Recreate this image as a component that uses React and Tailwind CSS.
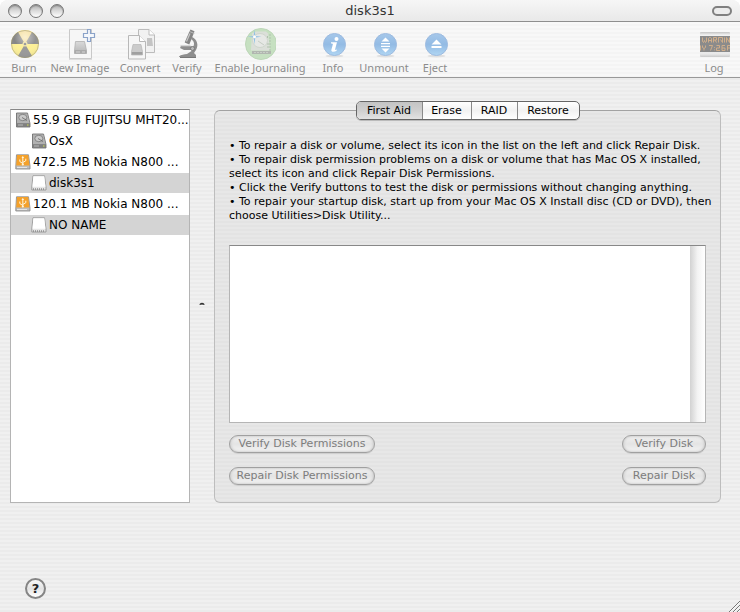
import React from 'react';

const STRIPES = 'bg-[repeating-linear-gradient(to_bottom,#f0f0f0_0px,#f0f0f0_2px,#ebebeb_2px,#ebebeb_4px)]';
const PANEL_STRIPES = 'bg-[repeating-linear-gradient(to_bottom,#e7e7e7_0px,#e7e7e7_2px,#e3e3e3_2px,#e3e3e3_4px)]';

function BurnIcon() {
  return (
    <svg viewBox="0 0 32 32" className="size-8">
      <defs>
        <radialGradient id="burnShade" cx="50%" cy="25%" r="80%">
          <stop offset="0" stopColor="#fff" stopOpacity=".5" />
          <stop offset=".5" stopColor="#fff" stopOpacity="0" />
          <stop offset="1" stopColor="#555" stopOpacity=".15" />
        </radialGradient>
      </defs>
      <circle cx="17" cy="16" r="14" fill="#fdf096" />
      <path d="M17 16 10 3.900A14 14 0 0 1 24 3.900Z" fill="#f6e0a0" />
      <path d="M17 16 10 3.900A14 14 0 0 0 3 16Z" fill="#868686" />
      <path d="M17 16 24 3.900A14 14 0 0 1 31 16Z" fill="#929292" />
      <path d="M17 16 10 28.100A14 14 0 0 0 24 28.100Z" fill="#989898" />
      <circle cx="17" cy="16" r="2.500" fill="#f3e6a0" />
      <circle cx="17" cy="16" r="1.300" fill="#888" />
      <circle cx="17" cy="16" r="13.500" fill="url(#burnShade)" stroke="#9a9478" strokeOpacity=".5" />
    </svg>
  );
}

function NewImageIcon() {
  return (
    <svg viewBox="0 0 32 32" className="size-8">
      <defs>
        <linearGradient id="miniDrive" x1="0" y1="0" x2="0" y2="1">
          <stop offset="0" stopColor="#dadada" />
          <stop offset="1" stopColor="#b4b4b4" />
        </linearGradient>
      </defs>
      <path d="M5.500 1.500H27.500V30.500H5.500Z" fill="#f6f6f6" stroke="#c9c9c9" />
      <path d="M5 31.500H28" stroke="#ddd" />
      <path d="M11.500 13.500h9l2 9v3h-12v-3Z" fill="url(#miniDrive)" stroke="#b0b0b0" strokeWidth=".8" />
      <path d="M10.500 22h12v3.500h-12Z" fill="#a9a9a9" />
      <path d="M12 24h4M18 24h3" stroke="#dedede" strokeWidth=".8" />
      <path d="M23.500 1.500h3v4h4v4h-4v4h-3v-4h-4v-4h4Z" fill="#f5f8fc" stroke="#8ba3c9" strokeWidth="1.200" />
    </svg>
  );
}

function ConvertIcon() {
  return (
    <svg viewBox="0 0 32 32" className="size-8">
      <path d="M14.500 1.500H25l5.500 5.500V24.500H14.500Z" fill="#f1f1f1" stroke="#bcbcbc" />
      <path d="M25 1.500V7h5.500" fill="#fff" stroke="#bcbcbc" />
      <path d="M23 10h5l1 8h-6Z" fill="#c4c4c4" />
      <path d="M4.500 7.500H15.500l6 6V31H4.500Z" fill="#f6f6f6" stroke="#b8b8b8" />
      <path d="M15.500 7.500v6h6" fill="#fff" stroke="#b8b8b8" />
      <path d="M9 16.500h8l1.500 7v3.500H7.500V23.500Z" fill="#cbcbcb" stroke="#afafaf" strokeWidth=".6" />
      <path d="M7.800 24h10.500v2.700h-10.500Z" fill="#a0a0a0" />
    </svg>
  );
}

function VerifyIcon() {
  return (
    <svg viewBox="0 0 32 32" className="size-8">
      <path d="M8 28.500c2-2 5-2 8-2.500l6-4h-9l-4-2 1-2h9l3 1c2-3 1-6-2-8l1-2c5 2 7 8 4 13l-2 3 2 2v2H8Z" fill="#8e8e8e" />
      <path d="M19.500 1.500l4 1.800-1 2.700-4.200 10.500-4.600-2L18 4.500Z" fill="#858585" />
      <path d="M19 5.500l-3.500 8" stroke="#c9c9c9" strokeWidth="1.200" />
      <path d="M18.500 3.500l5 2" stroke="#c9c9c9" strokeWidth=".8" />
      <path d="M9.500 18h10" stroke="#b5b5b5" />
      <circle cx="21.500" cy="20.500" r="2" fill="#b9b9b9" stroke="#7a7a7a" />
      <path d="M9 29.500h16" stroke="#777" />
    </svg>
  );
}

function JournalIcon() {
  return (
    <svg viewBox="0 0 32 32" className="size-8">
      <circle cx="17" cy="16" r="15.500" fill="#c6e0c1" stroke="#bdd6b8" />
      <path d="M8 5.500 12 3.500h10l2 2 2 17H7Z" fill="#dbdfd9" />
      <ellipse cx="16" cy="12.500" rx="7.500" ry="7" fill="#e6e8e5" stroke="#cfd6cd" />
      <path d="M14 13l6 4" stroke="#c6cdc4" />
      <path d="M8 23h19v3H8Z" fill="#b1b7b0" />
      <path d="M10 24.500h15" stroke="#c9cfc7" strokeDasharray="2 1" />
      <path d="M26 6v18M23.500 8v3M24 15v6" stroke="#b0c2ad" strokeDasharray="2 1" />
      <path d="M10.500 1.500 11.300 8l6.200.8-6.200.8-.8 7-.8-7-6.200-.8 6.200-.8Z" fill="#8fc0e4" />
      <circle cx="10.500" cy="8.800" r="1.500" fill="#fff" />
    </svg>
  );
}

function BlueDisc({ id, children }) {
  return (
    <svg viewBox="0 0 32 32" className="size-8">
      <defs>
        <linearGradient id={id} x1="0" y1="0" x2="0" y2="1">
          <stop offset="0" stopColor="#a6c8ea" />
          <stop offset=".5" stopColor="#93bbe4" />
          <stop offset="1" stopColor="#b0d6f3" />
        </linearGradient>
      </defs>
      <ellipse cx="17.500" cy="28" rx="9" ry="1.500" fill="#e0e0e0" />
      <circle cx="17.500" cy="16.500" r="11" fill={`url(#${id})`} stroke="#9dbbe0" />
      {children}
    </svg>
  );
}

function InfoIcon() {
  return (
    <BlueDisc id="discInfo">
      <circle cx="19.500" cy="11" r="2" fill="#fff" />
      <path d="M14 14.300h6l-1.900 7c-.2 1 .4 1 1.800.3l-.3 1.200c-2 1.400-6 1.600-5.200-1l1.400-5.300c.2-.8-.2-1-1.800-1Z" fill="#fff" />
    </BlueDisc>
  );
}

function UnmountIcon() {
  return (
    <BlueDisc id="discUnmount">
      <path d="M17.500 9.500l4 4h-8ZM13 15h9v1.300h-9ZM13 17.700h9v1.300h-9ZM13.500 20.500h8l-4 4Z" fill="#fff" />
    </BlueDisc>
  );
}

function EjectIcon() {
  return (
    <BlueDisc id="discEject">
      <path d="M17.500 11.500l5 5h-10ZM12.500 18h10v2h-10Z" fill="#fff" />
    </BlueDisc>
  );
}

function LogIcon() {
  return (
    <svg viewBox="0 0 32 32" className="size-8">
      <defs>
        <linearGradient id="logFrame" x1="0" y1="0" x2="0" y2="1">
          <stop offset="0" stopColor="#c4c4c4" />
          <stop offset=".12" stopColor="#f1f1f1" />
          <stop offset=".88" stopColor="#e9e9e9" />
          <stop offset="1" stopColor="#c9c9c9" />
        </linearGradient>
      </defs>
      <rect x="2" y="4" width="30" height="25" rx="1" fill="url(#logFrame)" />
      <rect x="2" y="8" width="30" height="16" fill="#8b8b8b" />
      <g fill="none" stroke="#d6b18a" strokeWidth=".9">
        <path d="M4.500 9.500v4l1 1 1-2 1 2 1-1v-4M10.500 14.500v-4l1-1h1l1 1v4M10.500 12.500h3M15.500 14.500v-5h3v2.500h-3M17 12l1.500 2.500M20.500 14.500v-5h4v5l-2-3M26.500 9.500v5M28.500 14.500v-5l3 5v-5" />
        <path d="M2.500 17.500v5M4.500 17.500v2l1.500 1 1.500-1v-2M6 20.500v2M11 17.500h3.500l-2 5M16.500 19v.8M16.500 21.500v.8M18.500 17.500h3v2.500h-3v2.500h3.500M27 17.500h-3v5h3v-2.500h-3M29.500 22.500v-5h2.500M29.500 20h2.500" />
      </g>
    </svg>
  );
}

function DriveIcon() {
  return (
    <svg viewBox="0 0 16 16" className="size-4 shrink-0">
      <path d="M1.500 1h11L15 11.500V15H1.500Z" fill="#8c8c8c" stroke="#686868" strokeWidth=".8" />
      <path d="M2 1.500h10.300L14.500 11H2Z" fill="#b1b1b1" />
      <ellipse cx="7.800" cy="5.500" rx="4" ry="3.200" fill="#c9c9c9" stroke="#777" strokeWidth=".8" />
      <path d="M7 5.500l5 3" stroke="#666" strokeWidth=".8" />
      <path d="M2 11.500h12.500V14.500H2Z" fill="#808080" />
      <path d="M3 13h5" stroke="#c9c9c9" strokeWidth=".8" />
      <path d="M12 13h1.500" stroke="#d4e04c" />
    </svg>
  );
}

function UsbDriveIcon() {
  return (
    <svg viewBox="0 0 16 16" className="size-4 shrink-0">
      <path d="M1.500 .8h12L15 12v3H.8V12Z" fill="#bdbdbd" stroke="#858585" strokeWidth=".8" />
      <path d="M2 1h11.200l1.300 10.500H1.200Z" fill="#f4a12b" />
      <path d="M7.800 11V2.800M7.800 9.500 4.800 7.500V5.500M7.800 8.500l3-1.800V4.700" fill="none" stroke="#fff5dc" />
      <path d="M6.500 4 7.800 2l1.300 2Z" fill="#fff5dc" />
      <circle cx="7.800" cy="10.500" r="1.100" fill="#fff5dc" />
      <path d="M2 13.500h10" stroke="#efefef" strokeWidth=".8" />
    </svg>
  );
}

function VolumeIcon() {
  return (
    <svg viewBox="0 0 16 16" className="size-4 shrink-0">
      <path d="M2 .8h11.500L15 12v3H.8V12Z" fill="#e6e6e6" stroke="#8f8f8f" strokeWidth=".8" />
      <path d="M2.300 1.200h11l1.200 10.600H1.500Z" fill="#fff" />
      <path d="M2 14h12" stroke="#666" strokeDasharray="1 1" />
    </svg>
  );
}

const tools = [
  { label: 'Burn', Icon: BurnIcon, width: 'w-8' },
  { label: 'New Image', Icon: NewImageIcon, width: 'w-[58px]' },
  { label: 'Convert', Icon: ConvertIcon, width: 'w-10' },
  { label: 'Verify', Icon: VerifyIcon, width: 'w-8' },
  { label: 'Enable Journaling', Icon: JournalIcon, width: 'w-[92px]' },
  { label: 'Info', Icon: InfoIcon, width: 'w-8' },
  { label: 'Unmount', Icon: UnmountIcon, width: 'w-12' },
  { label: 'Eject', Icon: EjectIcon, width: 'w-8' },
];

const disks = [
  { name: '55.9 GB FUJITSU MHT20...', Icon: DriveIcon },
  { name: 'OsX', Icon: DriveIcon, child: true },
  { name: '472.5 MB Nokia N800 ...', Icon: UsbDriveIcon },
  { name: 'disk3s1', Icon: VolumeIcon, child: true, selected: true },
  { name: '120.1 MB Nokia N800 ...', Icon: UsbDriveIcon },
  { name: 'NO NAME', Icon: VolumeIcon, child: true, selected: true },
];

const tabs = [
  { label: 'First Aid', width: 'w-[65px]' },
  { label: 'Erase', width: 'w-[49px]' },
  { label: 'RAID', width: 'w-[46px]' },
  { label: 'Restore', width: 'w-[62px]' },
];

function ToolButton({ label, Icon, width }) {
  return (
    <button type="button" className={`flex flex-col items-center font-['Noto_Sans',sans-serif] text-[11px] leading-4 whitespace-nowrap text-[#8c8c8c] ${width}`}>
      <Icon />
      {label}
    </button>
  );
}

function WindowButton({ label }) {
  return (
    <button
      type="button"
      aria-label={label}
      className="size-[14px] rounded-full border border-[#777] bg-linear-to-b from-[#b0b0b0] via-[#dcdcdc] to-white shadow-[inset_0_1px_1px_#8a8a8a]"
    />
  );
}

function PillButton({ children, width }) {
  return (
    <button
      type="button"
      className={`flex h-[18px] items-center justify-center rounded-full border border-[#a0a0a0] bg-linear-to-b from-[#f0f0f0] via-[#e4e4e4] to-[#f4f4f4] text-[11px] leading-4 whitespace-nowrap text-[#7d7d7d] shadow-[inset_0_0_3px_#b5b5b5,0_1px_0_#cfcfcf] ${width}`}
    >
      {children}
    </button>
  );
}

export default function App() {
  return (
    <div className={`flex min-h-screen flex-col rounded-t-lg font-['DejaVu_Sans',sans-serif] text-black ${STRIPES}`}>
      <header>
        <div className="grid h-[22px] grid-cols-[1fr_auto_1fr] items-center rounded-t-lg border-b border-[#8e8e8e] bg-linear-to-b from-[#f6f6f6] to-[#e9e9e9] px-2">
          <div className="flex gap-[7px]">
            <WindowButton label="Close" />
            <WindowButton label="Minimize" />
            <WindowButton label="Zoom" />
          </div>
          <h1 className="text-[13px] leading-5 text-[#333]">disk3s1</h1>
          <button
            type="button"
            aria-label="Toggle toolbar"
            className="h-[10px] w-5 justify-self-end rounded-full border-2 border-[#808080] bg-[#ececec]"
          />
        </div>
        <div className="flex h-14 items-start gap-[11px] border-b border-[#999] bg-[repeating-linear-gradient(to_bottom,#f8f8f8_0px,#f8f8f8_2px,#f4f4f4_2px,#f4f4f4_4px)] pt-[6px] pr-[10px] pl-2">
          {tools.map((tool) => (
            <ToolButton key={tool.label} {...tool} />
          ))}
          <div className="ml-auto">
            <ToolButton label="Log" Icon={LogIcon} width="w-8" />
          </div>
        </div>
      </header>

      <main className="flex flex-1 pt-[31px] pr-[19px] pl-[10px]">
        <ul className="w-[180px] shrink-0 border border-[#b4b4b4] border-t-[#888] bg-white text-[12px]">
          {disks.map(({ name, Icon, child, selected }) => (
            <li key={name} className="h-[21px]">
              <button
                type="button"
                className={`flex h-5 w-full items-center gap-[2px] overflow-hidden whitespace-nowrap ${child ? 'pl-5' : 'pl-1'} ${selected ? 'bg-[#d4d4d4]' : ''}`}
              >
                <Icon />
                {name}
              </button>
            </li>
          ))}
        </ul>

        <div className="flex w-6 shrink-0 items-center justify-center pb-1">
          <svg viewBox="0 0 6 4" className="h-1 w-[6px]">
            <path d="M.5 3C.5 0 5.500 0 5.500 3Z" fill="#333" />
            <path d="M1.500 3.200h3" stroke="#fff" />
          </svg>
        </div>

        <section className={`mt-px flex min-w-0 flex-1 flex-col rounded-md border border-[#bdbdbd] border-t-[#a2a2a2] px-[14px] pb-[17px] ${PANEL_STRIPES}`}>
          <nav className="-mt-[10px] flex h-[19px] shrink-0 self-center overflow-hidden rounded-[5px] border border-[#666] bg-linear-to-b from-white via-[#f2f2f2] to-white shadow-[0_1px_0_#bbb]">
            {tabs.map(({ label, width }, i) => (
              <button
                key={label}
                type="button"
                className={`text-[11px] leading-4 whitespace-nowrap ${width} ${i === 0 ? 'bg-linear-to-b from-[#c4c4c4] via-[#cfcfcf] to-[#e2e2e2]' : 'border-l border-[#8a8a8a]'}`}
              >
                {label}
              </button>
            ))}
          </nav>

          <div className="mt-[19px] text-[11px] leading-[14px] whitespace-nowrap">
            <p>• To repair a disk or volume, select its icon in the list on the left and click Repair Disk.</p>
            <p>
              • To repair disk permission problems on a disk or volume that has Mac OS X installed,
              <br />
              select its icon and click Repair Disk Permissions.
            </p>
            <p>• Click the Verify buttons to test the disk or permissions without changing anything.</p>
            <p>
              • To repair your startup disk, start up from your Mac OS X Install disc (CD or DVD), then
              <br />
              choose Utilities&gt;Disk Utility...
            </p>
          </div>

          <div className="mt-[22px] flex flex-1 justify-end border border-[#b5b5b5] border-t-[#888] bg-white">
            <div className="w-[15px] bg-linear-to-r from-[#d2d2d2] via-[#f3f3f3] to-white" />
          </div>

          <div className="mt-3 flex flex-col gap-[14px]">
            <div className="flex justify-between">
              <PillButton width="w-[146px]">Verify Disk Permissions</PillButton>
              <PillButton width="w-[84px]">Verify Disk</PillButton>
            </div>
            <div className="flex justify-between">
              <PillButton width="w-[146px]">Repair Disk Permissions</PillButton>
              <PillButton width="w-[84px]">Repair Disk</PillButton>
            </div>
          </div>
        </section>
      </main>

      <footer className="flex h-[109px] items-end justify-between pl-[25px]">
        <button
          type="button"
          aria-label="Help"
          className="mb-[13px] flex size-[21px] items-center justify-center rounded-full border-2 border-[#858585] bg-linear-to-b from-[#fafafa] via-[#e3e3e3] to-white text-[13px] leading-4 font-bold text-[#222]"
        >
          ?
        </button>
        <svg viewBox="0 0 12 12" className="size-3">
          <path d="M1 12 12 1M5 12l7-7M9 12l3-3" stroke="#777" />
          <path d="M2 12 12 2M6 12l6-6M10 12l2-2" stroke="#fff" strokeWidth=".6" />
        </svg>
      </footer>
    </div>
  );
}
